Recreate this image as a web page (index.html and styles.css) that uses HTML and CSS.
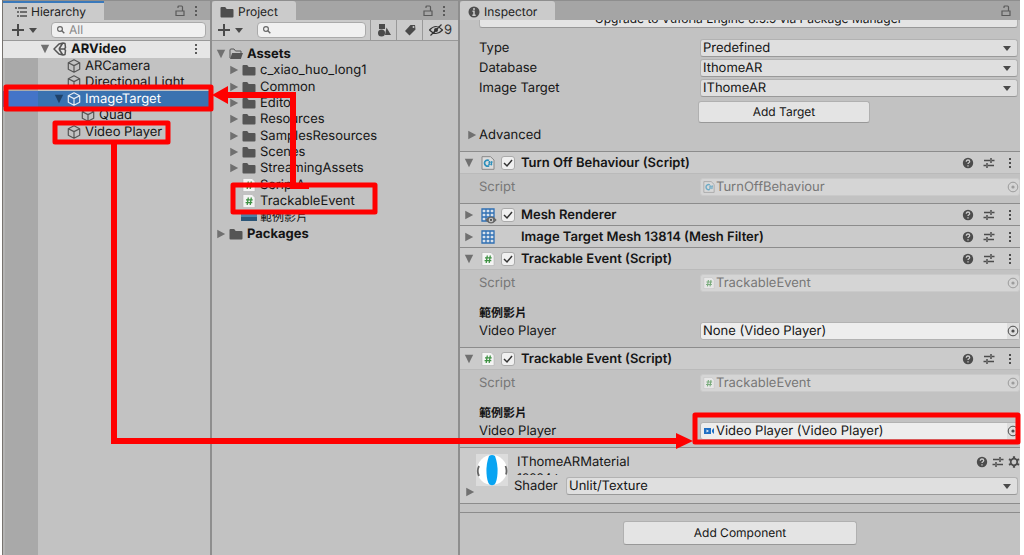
FILE: index.html
```
<!DOCTYPE html>
<html lang="zh-Hant">
<head>
    <meta charset="UTF-8">
    <meta name="viewport" content="width=device-width, initial-scale=1.0">
    <title>ARVideo</title>
    <link rel="stylesheet" href="styles.css">
</head>
<body>
    <!-- Shared icons -->
    <svg class="sprite" aria-hidden="true">
        <symbol id="down" viewBox="0 0 12 12"><path d="M1 1h10L6 11z" fill="currentColor"/></symbol>
        <symbol id="right" viewBox="0 0 12 12"><path d="M1.500 1v10L11 6z" fill="currentColor"/></symbol>
        <symbol id="caret" viewBox="0 0 8 5"><path d="M0 0h8L4 5z" fill="currentColor"/></symbol>
        <symbol id="plus" viewBox="0 0 14 14"><path d="M7 1v12M1 7h12" stroke="currentColor" stroke-width="2"/></symbol>
        <symbol id="lock" viewBox="0 0 10 12"><path d="M1 6h8v4.500H1zM3 3V2q0-1 1-1h2.500q1 0 1 1v4" fill="none" stroke="currentColor" stroke-width="1.200"/></symbol>
        <symbol id="kebab" viewBox="0 0 4 12"><path d="M1 1h2v2H1zM1 5h2v2H1zM1 9h2v2H1z" fill="currentColor"/></symbol>
        <symbol id="search" viewBox="0 0 12 12"><circle cx="5" cy="5" r="2.400" fill="none" stroke="currentColor" stroke-width="1.200"/><path d="M6.800 6.800l2.500 2.500" stroke="currentColor" stroke-width="1.400"/></symbol>
        <symbol id="folder" viewBox="0 0 14 12"><path d="M.5 2q0-1 1-1h3.700l1.500 2H12.500q1 0 1 1v6.500q0 1-1 1h-11q-1 0-1-1z" fill="currentColor"/></symbol>
        <symbol id="folder-open" viewBox="0 0 14 12"><path d="M1 10V2q0-1 1-1h3l1.500 2H12v2" fill="none" stroke="currentColor"/><path d="M3.200 5H14l-2.200 6H1z" fill="currentColor"/></symbol>
        <symbol id="cube" viewBox="0 0 14 14"><path d="M7 .8l5.700 2.900v6.600L7 13.200l-5.700-2.900V3.700zM1.300 3.700L7 6.600l5.700-2.900M7 6.600v6.600" fill="none" stroke="currentColor" stroke-width="1.200" stroke-linejoin="round"/></symbol>
        <symbol id="unity" viewBox="0 0 14 14"><path d="M1 7l5-5 4-1 2 .5.500 4-1 1.500 1 1.500-.5 4-2 .5-4-1zM6 7h5.500M6 7L9.500 1.500M6 7l3.500 5.500" fill="none" stroke="currentColor" stroke-width="1.500" stroke-linejoin="round"/></symbol>
        <symbol id="script" viewBox="0 0 14 14"><path d="M1 .5h9L13 3.500v10H1z" fill="#f4f4f4" stroke="#b4b4b4" stroke-width=".6"/><path d="M6.300 3.500L5.200 11M9.300 3.500L8.200 11M4 5.800h6.700M3.600 8.700h6.700" stroke="#3d9142" stroke-width="1.300"/></symbol>
        <symbol id="cs" viewBox="0 0 14 14"><path d="M1 .7h8.500L13 4v9.300H1z" fill="#dcdcdc" stroke="#888"/><path d="M8 4.500a3 3 0 1 0 0 5.200" fill="none" stroke="#2c8fba" stroke-width="1.700"/><path d="M8.600 5l-.5 4.500M10.800 5l-.5 4.500M7.300 6.200h4.300M7 8.200h4.300" stroke="#2c8fba" stroke-width="1"/></symbol>
        <symbol id="mesh" viewBox="0 0 14 14"><path d="M1 1h12v12H1zM5 1v12M9 1v12M1 5h12M1 9h12" fill="#d9e2ec" stroke="#2f6fb3" stroke-width="1.300"/></symbol>
        <symbol id="eye" viewBox="0 0 10 7"><path d="M0 3.500Q5-2.500 10 3.500 5 9.500 0 3.500z" fill="#666"/><circle cx="5" cy="3.500" r="2" fill="#ccc"/><circle cx="5" cy="3.500" r="1" fill="#555"/></symbol>
        <symbol id="help" viewBox="0 0 12 12"><circle cx="6" cy="6" r="5.200" fill="currentColor"/><path d="M4.300 4.800q0-1.800 1.700-1.800t1.700 1.500q0 .8-.9 1.300-.8.400-.8 1.200M6 8.300v1.300" fill="none" stroke="#cbcbcb" stroke-width="1.300"/></symbol>
        <symbol id="sliders" viewBox="0 0 12 12"><path d="M1 3.500h6M9 3.500h2.500M8 1v5M.5 8.500H3M5 8.500h6M4 6v5" stroke="currentColor" stroke-width="1.500"/></symbol>
        <symbol id="gear" viewBox="0 0 12 12"><circle cx="6" cy="6" r="3.300" fill="none" stroke="currentColor" stroke-width="1.800"/><path d="M6 .3v2M6 9.700v2M1 3.100l1.800 1M9.200 7.900l1.800 1M1 8.900l1.800-1M9.200 4.100l1.800-1" stroke="currentColor" stroke-width="2.200"/></symbol>
        <symbol id="target" viewBox="0 0 12 12"><circle cx="6" cy="6" r="4.800" fill="none" stroke="currentColor"/><circle cx="6" cy="6" r="1.600" fill="currentColor"/></symbol>
    </svg>

    <main class="editor">
        <!-- Hierarchy -->
        <section class="panel hierarchy">
            <header class="tab-bar">
                <h2 class="tab active">
                    <svg class="icon-12" viewBox="0 0 12 12"><path d="M0 2h2M3 2h9M2 6h2M5 6h7M2 10h2M5 10h7" stroke="currentColor" stroke-width="1.300"/></svg>
                    Hierarchy
                </h2>
                <button class="icon-button" aria-label="Lock"><svg class="icon-12"><use href="#lock"/></svg></button>
                <button class="icon-button" aria-label="Menu"><svg class="icon-12"><use href="#kebab"/></svg></button>
            </header>
            <div class="toolbar">
                <button class="add" aria-label="Create"><svg class="icon-14"><use href="#plus"/></svg><svg class="caret"><use href="#caret"/></svg></button>
                <label class="search">
                    <svg class="icon-12"><use href="#search"/></svg>
                    <input type="text" placeholder="All" aria-label="Search hierarchy">
                </label>
            </div>
            <ul class="tree">
                <li class="row scene"><svg class="fold"><use href="#down"/></svg><svg class="icon-14"><use href="#unity"/></svg><span>ARVideo</span>
                    <button class="icon-button" aria-label="Scene menu"><svg class="icon-12"><use href="#kebab"/></svg></button></li>
                <li class="row child"><span class="fold"></span><svg class="icon-14"><use href="#cube"/></svg><span>ARCamera</span></li>
                <li class="row child"><span class="fold"></span><svg class="icon-14"><use href="#cube"/></svg><span>Directional Light</span></li>
                <li class="row child selected"><svg class="fold"><use href="#down"/></svg><svg class="icon-14"><use href="#cube"/></svg><span>ImageTarget</span></li>
                <li class="row grandchild"><span class="fold"></span><svg class="icon-14"><use href="#cube"/></svg><span>Quad</span></li>
                <li class="row child"><span class="fold"></span><svg class="icon-14"><use href="#cube"/></svg><span>Video Player</span></li>
            </ul>
        </section>

        <!-- Project -->
        <section class="panel project">
            <header class="tab-bar">
                <h2 class="tab"><svg class="icon-14"><use href="#folder"/></svg>Project</h2>
                <button class="icon-button" aria-label="Lock"><svg class="icon-12"><use href="#lock"/></svg></button>
                <button class="icon-button" aria-label="Menu"><svg class="icon-12"><use href="#kebab"/></svg></button>
            </header>
            <div class="toolbar">
                <button class="add" aria-label="Create"><svg class="icon-14"><use href="#plus"/></svg><svg class="caret"><use href="#caret"/></svg></button>
                <label class="search">
                    <svg class="icon-12"><use href="#search"/></svg>
                    <input type="text" aria-label="Search project">
                </label>
                <button class="tool" aria-label="Search by type"><svg class="icon-14" viewBox="0 0 14 14"><path d="M2 1h6v5H2zM9.500 4.500L14 12H8z" fill="currentColor"/><circle cx="4.500" cy="10" r="3.500" fill="currentColor"/></svg></button>
                <button class="tool" aria-label="Search by label"><svg class="icon-14" viewBox="0 0 14 14"><path d="M7.500 2H12l.5 4.500-6 6L2 8z" fill="currentColor"/><circle cx="10.500" cy="4" r="1" fill="#cbcbcb"/></svg></button>
                <button class="tool hidden-count"><svg class="icon-14" viewBox="0 0 14 14"><path d="M.5 7Q7 0 13.500 7 7 14 .5 7zM1.500 12.500l11-11" fill="none" stroke="currentColor" stroke-width="1.200"/><circle cx="7" cy="7" r="2" fill="currentColor"/></svg>9</button>
            </div>
            <ul class="tree">
                <li class="row root"><svg class="fold"><use href="#down"/></svg><svg class="icon-14"><use href="#folder-open"/></svg><span>Assets</span></li>
                <li class="row"><svg class="fold"><use href="#right"/></svg><svg class="icon-14"><use href="#folder"/></svg><span>c_xiao_huo_long1</span></li>
                <li class="row"><svg class="fold"><use href="#right"/></svg><svg class="icon-14"><use href="#folder"/></svg><span>Common</span></li>
                <li class="row"><svg class="fold"><use href="#right"/></svg><svg class="icon-14"><use href="#folder"/></svg><span>Editor</span></li>
                <li class="row"><svg class="fold"><use href="#right"/></svg><svg class="icon-14"><use href="#folder"/></svg><span>Resources</span></li>
                <li class="row"><svg class="fold"><use href="#right"/></svg><svg class="icon-14"><use href="#folder"/></svg><span>SamplesResources</span></li>
                <li class="row"><svg class="fold"><use href="#right"/></svg><svg class="icon-14"><use href="#folder"/></svg><span>Scenes</span></li>
                <li class="row"><svg class="fold"><use href="#right"/></svg><svg class="icon-14"><use href="#folder"/></svg><span>StreamingAssets</span></li>
                <li class="row"><span class="fold"></span><svg class="icon-14"><use href="#script"/></svg><span>ScriptA</span></li>
                <li class="row"><span class="fold"></span><svg class="icon-14"><use href="#script"/></svg><span>TrackableEvent</span></li>
                <li class="row video-file"><span class="fold"></span><svg class="icon-14" viewBox="0 0 14 14"><path d="M-1 2h16v5H-1z" fill="#4b82a8"/><path d="M-1 7h16v4H-1z" fill="#2c5678"/></svg><span>範例影片</span></li>
                <li class="row root"><svg class="fold"><use href="#right"/></svg><svg class="icon-14"><use href="#folder"/></svg><span>Packages</span></li>
            </ul>
        </section>

        <!-- Inspector -->
        <section class="panel inspector">
            <header class="tab-bar">
                <h2 class="tab">
                    <svg class="icon-12" viewBox="0 0 12 12"><circle cx="6" cy="6" r="5.500" fill="currentColor"/><path d="M6 2v2M4.500 5.200H6v4M4.300 9.200h3.400" fill="none" stroke="#cbcbcb" stroke-width="1.500"/></svg>
                    Inspector
                </h2>
                <button class="icon-button" aria-label="Lock"><svg class="icon-12"><use href="#lock"/></svg></button>
            </header>

            <div class="target-settings">
                <div class="upgrade-clip"><button class="button upgrade">Upgrade to Vuforia Engine 8.5.9 via Package Manager</button></div>
                <div class="select-rows">
                    <div class="field">
                        <label for="type">Type</label>
                        <div class="dropdown"><select id="type"><option>Predefined</option></select><svg class="caret"><use href="#caret"/></svg></div>
                    </div>
                    <div class="field">
                        <label for="database">Database</label>
                        <div class="dropdown"><select id="database"><option>IthomeAR</option></select><svg class="caret"><use href="#caret"/></svg></div>
                    </div>
                    <div class="field">
                        <label for="imageTarget">Image Target</label>
                        <div class="dropdown"><select id="imageTarget"><option>IThomeAR</option></select><svg class="caret"><use href="#caret"/></svg></div>
                    </div>
                </div>
                <button class="button add-target">Add Target</button>
                <button class="advanced"><svg class="fold"><use href="#right"/></svg>Advanced</button>
            </div>

            <article class="component">
                <header class="component-header">
                    <svg class="fold"><use href="#down"/></svg>
                    <svg class="icon-14"><use href="#cs"/></svg>
                    <input type="checkbox" id="turnOff" checked>
                    <label for="turnOff">Turn Off Behaviour (Script)</label>
                    <span class="actions"><svg class="icon-12"><use href="#help"/></svg><svg class="icon-12"><use href="#sliders"/></svg><svg class="icon-12"><use href="#kebab"/></svg></span>
                </header>
                <div class="component-body">
                    <div class="field disabled">
                        <label for="script1">Script</label>
                        <div class="object"><svg class="icon-12"><use href="#cs"/></svg><input type="text" id="script1" value="TurnOffBehaviour" disabled><svg class="icon-12"><use href="#target"/></svg></div>
                    </div>
                </div>
            </article>

            <article class="component">
                <header class="component-header">
                    <svg class="fold"><use href="#right"/></svg>
                    <svg class="icon-14 mesh-eye" viewBox="0 0 14 14"><use href="#mesh" width="14" height="14"/><use href="#eye" x="4" y="8" width="12" height="8"/></svg>
                    <input type="checkbox" id="renderer" checked>
                    <label for="renderer">Mesh Renderer</label>
                    <span class="actions"><svg class="icon-12"><use href="#help"/></svg><svg class="icon-12"><use href="#sliders"/></svg><svg class="icon-12"><use href="#kebab"/></svg></span>
                </header>
            </article>

            <article class="component">
                <header class="component-header">
                    <svg class="fold"><use href="#right"/></svg>
                    <svg class="icon-14"><use href="#mesh"/></svg>
                    <span></span>
                    <span>Image Target Mesh 13814 (Mesh Filter)</span>
                    <span class="actions"><svg class="icon-12"><use href="#help"/></svg><svg class="icon-12"><use href="#sliders"/></svg><svg class="icon-12"><use href="#kebab"/></svg></span>
                </header>
            </article>

            <article class="component">
                <header class="component-header">
                    <svg class="fold"><use href="#down"/></svg>
                    <svg class="icon-14"><use href="#script"/></svg>
                    <input type="checkbox" id="event1" checked>
                    <label for="event1">Trackable Event (Script)</label>
                    <span class="actions"><svg class="icon-12"><use href="#help"/></svg><svg class="icon-12"><use href="#sliders"/></svg><svg class="icon-12"><use href="#kebab"/></svg></span>
                </header>
                <div class="component-body">
                    <div class="field disabled">
                        <label for="script2">Script</label>
                        <div class="object"><svg class="icon-12"><use href="#script"/></svg><input type="text" id="script2" value="TrackableEvent" disabled><svg class="icon-12"><use href="#target"/></svg></div>
                    </div>
                    <h3>範例影片</h3>
                    <div class="field">
                        <label for="player1">Video Player</label>
                        <div class="object"><input type="text" id="player1" value="None (Video Player)" readonly><button class="picker" aria-label="Select"><svg class="icon-12"><use href="#target"/></svg></button></div>
                    </div>
                </div>
            </article>

            <article class="component">
                <header class="component-header">
                    <svg class="fold"><use href="#down"/></svg>
                    <svg class="icon-14"><use href="#script"/></svg>
                    <input type="checkbox" id="event2" checked>
                    <label for="event2">Trackable Event (Script)</label>
                    <span class="actions"><svg class="icon-12"><use href="#help"/></svg><svg class="icon-12"><use href="#sliders"/></svg><svg class="icon-12"><use href="#kebab"/></svg></span>
                </header>
                <div class="component-body">
                    <div class="field disabled">
                        <label for="script3">Script</label>
                        <div class="object"><svg class="icon-12"><use href="#script"/></svg><input type="text" id="script3" value="TrackableEvent" disabled><svg class="icon-12"><use href="#target"/></svg></div>
                    </div>
                    <h3>範例影片</h3>
                    <div class="field">
                        <label for="player2">Video Player</label>
                        <div class="object"><svg class="icon-12" viewBox="0 0 12 12"><path d="M1 3h7v6H1zM9 5l2-2v6L9 7z" fill="#1f6fc4"/><path d="M3.500 4.500v3L6 6z" fill="#e8f0f8"/></svg><input type="text" id="player2" value="Video Player (Video Player)" readonly><button class="picker" aria-label="Select"><svg class="icon-12"><use href="#target"/></svg></button></div>
                    </div>
                </div>
            </article>

            <article class="component material">
                <svg class="fold"><use href="#right"/></svg>
                <svg class="preview" viewBox="0 0 32 32"><path d="M0 0h32v32H0z" fill="#dcdcdc"/><circle cx="16" cy="16" r="15" fill="#fff"/><path d="M13 2q3-2 6 0 3 8 2.500 17-.5 9-3 11.500-2.500 1.500-5 0-2.500-2.500-3-11.500Q10 10 13 2z" fill="#08a4f2"/><path d="M3 12q-2.500 5 0 10M29.500 12q1.800 4 .5 8.500" fill="none" stroke="#666" stroke-width="1.800"/></svg>
                <div class="material-info">
                    <div class="material-title">
                        <span>IThomeARMaterial</span>
                        <span class="actions"><svg class="icon-12"><use href="#help"/></svg><svg class="icon-12"><use href="#sliders"/></svg><svg class="icon-12"><use href="#gear"/></svg></span>
                    </div>
                    <div class="material-id">12224 t</div>
                    <div class="shader">
                        <label for="shader">Shader</label>
                        <div class="dropdown"><select id="shader"><option>Unlit/Texture</option></select><svg class="caret"><use href="#caret"/></svg></div>
                    </div>
                </div>
            </article>

            <footer class="inspector-footer"><button class="button add-component">Add Component</button></footer>
        </section>
    </main>

    <!-- Red callouts drawn over the panels -->
    <svg class="callouts" width="1024" height="555" viewBox="0 0 1024 555" aria-hidden="true">
        <g fill="none" stroke="#f00" stroke-width="5" stroke-linejoin="round">
            <rect x="6" y="87" width="205" height="22"/>
            <rect x="55" y="123" width="113" height="19"/>
            <rect x="233" y="185" width="142" height="27"/>
            <rect x="695" y="415" width="323" height="27"/>
        </g>
        <path d="M293 186V95H227M114 143V441H678M290 186h19" fill="none" stroke="#f00" stroke-width="6"/>
        <path d="M212 95l16-9v18zM693 441l-17-8v16z" fill="#f00"/>
    </svg>
</body>
</html>
```
FILE: styles.css
```
* {
    margin: 0;
    padding: 0;
    box-sizing: border-box;
}

body {
    background-color: #fff;
    color: #151515;
    font: 13px/16px Inter, "Noto Sans CJK TC", sans-serif;
    text-rendering: geometricPrecision;
}

button,
input,
select {
    font: inherit;
    color: inherit;
    border: none;
    outline: none;
    background: none;
    min-width: 0;
    text-rendering: inherit;
}

svg {
    display: block;
    flex: none;
}

ul {
    list-style: none;
}

.sprite {
    position: absolute;
    width: 0;
    height: 0;
}

.icon-12 {
    width: 12px;
    height: 12px;
}

.icon-14 {
    width: 14px;
    height: 14px;
}

.fold {
    width: 12px;
    height: 10px;
    color: #707070;
    flex: none;
}

.caret {
    width: 8px;
    height: 5px;
    color: #4a4a4a;
}

.editor {
    display: grid;
    grid-template-columns: 207px 246px 1fr;
    gap: 2px;
    min-height: 100vh;
    margin: 0 4px 0 2px;
    padding-top: 1px;
    border-left: 1px solid #77736f;
    background-color: #8e8e8e;
}

.panel {
    background-color: #c2c2c2;
    min-width: 0;
}

/* Tabs and toolbars */
.tab-bar {
    display: flex;
    align-items: center;
    height: 19px;
    padding-right: 8px;
    background-color: #a5a5a5;
    color: #555;
}

.tab {
    display: flex;
    align-items: center;
    gap: 4px;
    height: 19px;
    padding: 2px 18px 0 8px;
    margin-right: auto;
    border-radius: 3px 3px 0 0;
    background-color: #cbcbcb;
    color: #222;
    font-size: 12px;
    font-weight: 400;
    white-space: nowrap;
}

.tab svg {
    color: #4e4e4e;
}

.tab.active {
    padding: 0 18px 0 12px;
    border-top: 2px solid #3a79bb;
    border-radius: 0;
}

.icon-button {
    display: flex;
    margin-left: 4px;
    color: #5a5a5a;
}

.toolbar {
    display: flex;
    align-items: center;
    height: 21px;
    background-color: #cbcbcb;
    border-bottom: 1px solid #999;
}

.add {
    display: flex;
    align-items: center;
    gap: 4px;
    padding-left: 8px;
    color: #4a4a4a;
}

.project .add {
    padding-left: 5px;
}

.search {
    display: flex;
    align-items: center;
    flex: 1;
    gap: 2px;
    min-width: 0;
    height: 16px;
    margin: 0 4px 0 14px;
    padding-left: 3px;
    border: 1px solid #aaa;
    border-radius: 4px;
    background-color: #f0f0f0;
    color: #666;
    font-size: 12px;
}

.search input {
    width: 100%;
}

.search input::placeholder {
    color: #888;
}

.tool {
    display: flex;
    align-items: center;
    justify-content: center;
    width: 26px;
    height: 20px;
    border-left: 1px solid #999;
    color: #4a4a4a;
}

.hidden-count {
    width: 36px;
    gap: 1px;
    color: #333;
}

/* Trees */
.tree {
    display: grid;
    grid-auto-rows: 1fr;
}

.hierarchy {
    background-image: linear-gradient(to right, #b4b4b4 2px, #a9a9a9 2px, #a9a9a9 35px, transparent 35px);
}

.hierarchy .tree {
    height: 99px;
}

.project .tree {
    height: 196px;
    margin-top: 5px;
}

.row {
    display: flex;
    align-items: center;
    padding-left: 16px;
    white-space: nowrap;
}

.row .icon-14 {
    margin: 0 4px 0 2px;
    color: #555;
}

.row.video-file .icon-14,
.mesh-eye {
    overflow: visible;
}

.row.video-file {
    font-size: 12px;
}

.row.root {
    padding-left: 3px;
    font-weight: 700;
}

.row.scene {
    padding: 0 8px 0 36px;
    background-color: #e6e6e6;
    font-weight: 700;
}

.row.scene .icon-button {
    margin-left: auto;
}

.row.child {
    padding-left: 50px;
}

.row.grandchild {
    padding-left: 64px;
}

.row.selected {
    background: linear-gradient(to right, #4474c8 35px, #3a72b0 35px);
    color: #fff;
}

.row.selected .icon-14 {
    color: #e4ecf5;
}

.row.selected .fold {
    color: #1f4269;
}

/* Inspector fields */
.button {
    display: block;
    height: 22px;
    border: 1px solid #b0b0b0;
    border-bottom-color: #989898;
    border-radius: 3px;
    background-color: #e4e4e4;
    font-size: 12px;
}

.target-settings {
    height: 131px;
    padding: 0 2px 0 19px;
}

.upgrade-clip {
    display: flex;
    align-items: flex-end;
    height: 8px;
    overflow: hidden;
}

.upgrade {
    width: 100%;
    padding-top: 4px;
}

.select-rows {
    display: grid;
    gap: 2px;
    margin-top: 11px;
}

.field {
    display: grid;
    grid-template-columns: 221px 1fr;
    align-items: center;
}

.dropdown {
    display: grid;
    grid-template-columns: 1fr 14px;
    align-items: center;
    height: 18px;
    border: 1px solid #b2b2b2;
    border-bottom-color: #999;
    border-radius: 3px;
    background-color: #dfdfdf;
}

.dropdown select {
    appearance: none;
    grid-row: 1;
    grid-column: 1 / 3;
    padding-left: 2px;
}

.dropdown .caret {
    grid-row: 1;
    grid-column: 2;
}

.add-target {
    width: 172px;
    margin: 4px 0 0 219px;
}

.advanced {
    display: flex;
    align-items: center;
    gap: 1px;
    margin: 4px 0 0 -13px;
}

.component {
    border-top: 1px solid #8c8c8c;
}

.component-header {
    display: grid;
    grid-template-columns: 12px 14px 14px 1fr auto;
    align-items: center;
    gap: 6px;
    height: 21px;
    padding: 0 4px 0 3px;
    background-color: #cbcbcb;
    font-weight: 600;
}

.component-header input {
    appearance: none;
    width: 14px;
    height: 14px;
    border: 1px solid #aaa;
    border-radius: 3px;
    background: #f0f0f0 url("data:image/svg+xml,%3Csvg xmlns='http://www.w3.org/2000/svg' viewBox='0 0 12 12'%3E%3Cpath d='M2 6l3 3 5-6' fill='none' stroke='%23333' stroke-width='1.500'/%3E%3C/svg%3E");
}

.actions {
    display: flex;
    gap: 9px;
    color: #4c4c4c;
}

.component-body {
    padding: 4px 0 7px 19px;
    border-top: 1px solid #bababa;
}

.component-body h3 {
    margin-top: 12px;
    font-size: 12px;
    line-height: 18px;
}

.object {
    display: flex;
    align-items: center;
    gap: 1px;
    height: 18px;
    padding-left: 2px;
    border: 1px solid #b2b2b2;
    border-radius: 3px;
    background-color: #ededed;
}

.object input {
    flex: 1;
}

.picker {
    display: flex;
    align-items: center;
    height: 16px;
    background-color: #dedede;
    color: #4c4c4c;
}

.disabled {
    color: #777;
}

.disabled .object {
    border-color: #cacaca;
    background-color: #d5d5d5;
}

.disabled .icon-12 {
    opacity: 0.6;
}

/* Material block */
.material {
    display: flex;
    align-items: flex-start;
    padding: 6px 2px 8px 4px;
    border-bottom: 1px solid #8c8c8c;
    background-color: #cbcbcb;
}

.material .fold {
    align-self: flex-end;
    margin-bottom: -2px;
}

.preview {
    width: 32px;
    height: 32px;
}

.material-info {
    flex: 1;
    padding-left: 6px;
}

.material-title {
    display: flex;
    align-items: center;
    justify-content: space-between;
    padding-left: 3px;
}

.material-title .actions {
    gap: 4px;
    margin-right: -2px;
}

.material-id {
    height: 3px;
    margin-top: 2px;
    padding-left: 3px;
    font-size: 12px;
    line-height: 12px;
    overflow: hidden;
}

.shader {
    display: grid;
    grid-template-columns: 52px 1fr;
    align-items: center;
    margin-top: 2px;
}

.inspector-footer {
    margin-top: 8px;
    padding-top: 8px;
    border-top: 1px solid #8c8c8c;
}

.add-component {
    width: 234px;
    height: 24px;
    margin: 0 auto;
}

.callouts {
    position: absolute;
    top: 0;
    left: 0;
    pointer-events: none;
}
```
